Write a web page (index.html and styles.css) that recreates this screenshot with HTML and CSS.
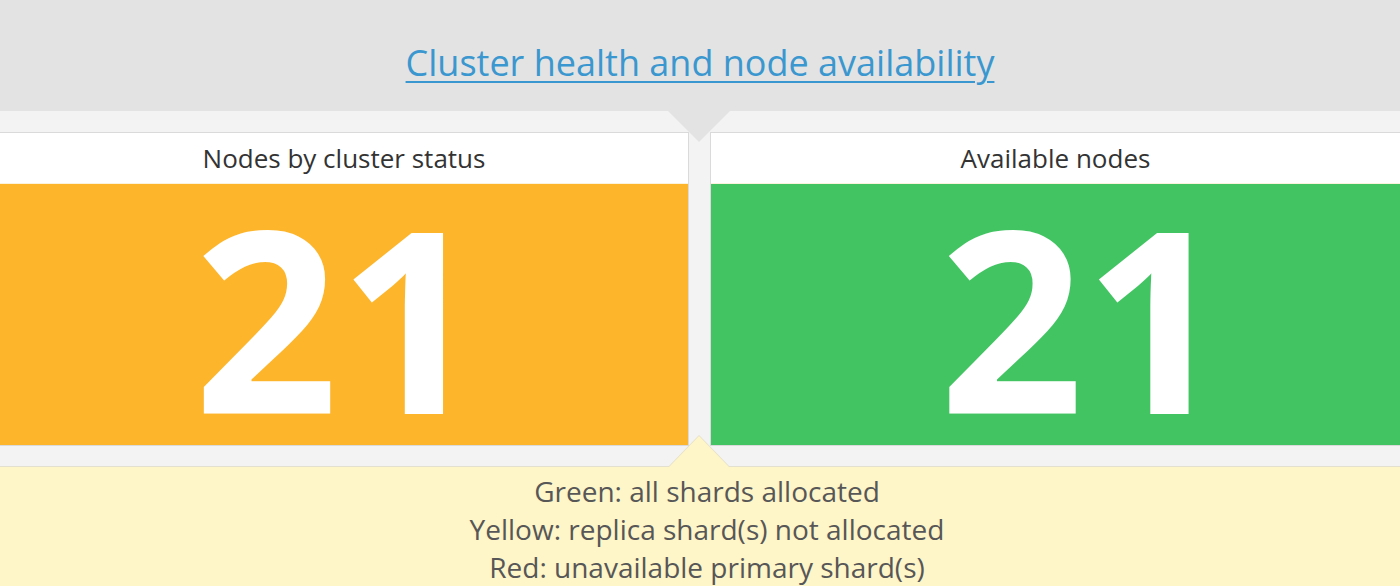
FILE: index.html
```html
<!DOCTYPE html>
<html>
<head>
<meta charset="utf-8">
<link rel="stylesheet" href="styles.css">
</head>
<body>
<div class="page">
  <header class="header">
    <a class="title" href="#">Cluster health and node availability</a>
  </header>
  <section class="board">
    <div class="panel panel-left">
      <div class="panel-title">Nodes by cluster status</div>
      <div class="metric metric-orange"><span class="metric-value">21</span></div>
    </div>
    <div class="panel panel-right">
      <div class="panel-title">Available nodes</div>
      <div class="metric metric-green"><span class="metric-value">21</span></div>
    </div>
  </section>
  <footer class="legend">
    <div class="legend-line">Green: all shards allocated</div>
    <div class="legend-line">Yellow: replica shard(s) not allocated</div>
    <div class="legend-line">Red: unavailable primary shard(s)</div>
  </footer>
</div>
</body>
</html>
```
FILE: styles.css
```css
html, body {
  margin: 0;
  padding: 0;
}
body {
  width: 1400px;
  height: 586px;
  overflow: hidden;
  font-family: "Open Sans", "Liberation Sans", sans-serif;
  background: #f3f3f3;
}
.page {
  display: flex;
  flex-direction: column;
  width: 1400px;
  height: 586px;
}
.header {
  position: relative;
  height: 111px;
  box-sizing: border-box;
  padding-top: 38px;
  background: #e3e3e3;
  text-align: center;
  z-index: 2;
}
.header::after {
  content: "";
  position: absolute;
  top: 100%;
  left: 668px;
  width: 62px;
  height: 31px;
  background: #e3e3e3;
  clip-path: polygon(0 0, 100% 0, 50% 100%);
}
.title {
  font-size: 36px;
  color: #3a97cf;
  text-decoration: underline;
  text-decoration-thickness: 2px;
  text-underline-offset: 5px;
}
.board {
  display: flex;
  gap: 21px;
  padding: 21px 0 20px;
  background: #f3f3f3;
  border-bottom: 1px solid #e4e0cf;
}
.panel {
  display: flex;
  flex-direction: column;
  background: #fff;
  border: 1px solid #dadada;
}
.panel-left {
  width: 688px;
  flex: 0 0 auto;
  border-left: none;
}
.panel-right {
  flex: 1 1 auto;
  border-right: none;
}
.panel-title {
  height: 51px;
  box-sizing: border-box;
  padding-top: 8px;
  text-align: center;
  font-size: 26px;
  line-height: 35px;
  color: #333;
  border-bottom: 1px solid #fbf3dc;
}
.metric {
  height: 261px;
  display: flex;
  align-items: center;
  justify-content: center;
  color: #fff;
}
.metric-orange {
  background: #fdb52c;
}
.metric-green {
  background: #42c463;
}
.metric-value {
  display: block;
  font-size: 253px;
  font-weight: 700;
  line-height: 253px;
  margin-top: 3px;
}
.panel-left .metric-value {
  margin-right: 11px;
}
.panel-right .metric-value {
  margin-left: 57px;
}
.legend {
  position: relative;
  flex: 1 1 auto;
  background: #fef5c8;
  padding-top: 5px;
  padding-left: 14px;
  text-align: center;
  font-size: 28px;
  line-height: 38px;
  color: #575757;
}
.legend::before,
.legend::after {
  content: "";
  position: absolute;
  left: 668px;
  width: 62px;
  clip-path: polygon(50% 0, 100% 100%, 0 100%);
}
.legend::before {
  top: -32px;
  height: 32px;
  background: #e4dfc7;
}
.legend::after {
  top: -31px;
  height: 32px;
  background: #fef5c8;
}
```
